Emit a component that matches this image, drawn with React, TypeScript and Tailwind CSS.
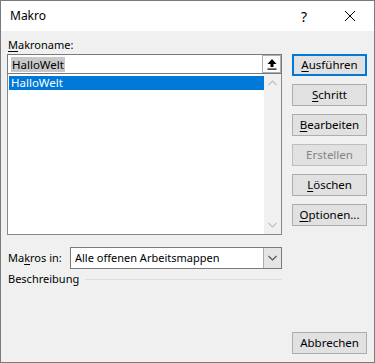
import React from 'react'

const font = { fontFamily: '"Noto Sans", "Liberation Sans", sans-serif' }

function U({ children }: { children: React.ReactNode }) {
  return <span className="underline underline-offset-2">{children}</span>
}

function Btn({ children, primary, disabled }: { children: React.ReactNode; primary?: boolean; disabled?: boolean }) {
  const cls = primary
    ? 'border-2 border-[#0078d7] text-black'
    : disabled
    ? 'border border-[#bfbfbf] text-[#838383]'
    : 'border border-[#adadad] text-black'
  return (
    <div className={`flex h-[22px] w-[75px] items-center justify-center bg-[#e1e1e1] text-[11.5px] leading-none ${cls}`}>
      {children}
    </div>
  )
}

function Chevron({ up, color }: { up?: boolean; color: string }) {
  return (
    <svg width="9" height="6" viewBox="0 0 9 6" fill="none">
      <path d={up ? 'M0.5 5 L4.5 1 L8.5 5' : 'M0.5 1 L4.5 5 L8.5 1'} stroke={color} strokeWidth="1.2" />
    </svg>
  )
}

export default function App() {
  return (
    <div style={font} className="flex h-[363px] w-[375px] flex-col border border-[#7a7a7a] text-[11px] text-black">
      {/* title bar */}
      <div className="flex h-[30px] items-center bg-white pl-[9px]">
        <span className="flex-1 text-[12px]">Makro</span>
        <span className="mr-[37px] text-[14px]">?</span>
        <svg width="12" height="12" viewBox="0 0 12 12" className="mr-[18px]">
          <path d="M1 1 L11 11 M11 1 L1 11" stroke="#000" strokeWidth="1" />
        </svg>
      </div>

      <div className="flex flex-1 gap-[10px] bg-[#f0f0f0] pb-[8px] pl-[6px]">
        {/* left column */}
        <div className="flex w-[275px] flex-col pt-[5px]">
          <div className="flex h-[18px] items-center pl-[1px]">
            <U>M</U>akroname:
          </div>
          <div className="flex h-[20px] items-stretch border border-[#7a7a7a] bg-white">
            <div className="flex flex-1 items-center pl-[3px]">
              <span className="bg-[#c8c8c8] px-[1px] text-[11.5px] leading-[15px]">HalloWelt</span>
            </div>
            <div className="flex w-[19px] items-center justify-center border border-[#adadad] bg-[#fcfcfc]">
              <svg width="10" height="12" viewBox="0 0 10 12">
                <path d="M5 1 L9.5 6 L6.5 6 L6.5 9 L3.5 9 L3.5 6 L0.5 6 Z" fill="#000" />
                <rect x="0.5" y="10.5" width="9" height="1.2" fill="#000" />
              </svg>
            </div>
          </div>
          <div className="flex h-[161px] border border-t-0 border-[#828790] bg-white">
            <div className="flex-1 pl-[1px] pt-[2px]">
              <div className="flex h-[14px] items-center bg-[#0078d7] pl-[2px] text-[11.5px] text-white">HalloWelt</div>
            </div>
            <div className="flex w-[17px] flex-col items-center justify-between bg-[#f0f0f0] py-[6px]">
              <Chevron up color="#c0c0c0" />
              <Chevron color="#c0c0c0" />
            </div>
          </div>

          <div className="mt-[12px] flex h-[22px] items-center">
            <span className="w-[63px] pl-[1px]">
              Ma<U>k</U>ros in:
            </span>
            <div className="flex h-[22px] flex-1 items-stretch border border-[#7a7a7a] bg-white">
              <div className="flex flex-1 items-center pl-[4px]">Alle offenen Arbeitsmappen</div>
              <div className="flex w-[18px] items-center justify-center border-l border-[#adadad] bg-[#e5e5e5]">
                <Chevron color="#555" />
              </div>
            </div>
          </div>

          <div className="mt-[2px] flex h-[16px] items-center gap-[6px] pl-[1px]">
            <span>Beschreibung</span>
            <div className="h-px flex-1 bg-[#dcdcdc]" />
          </div>
        </div>

        {/* right column */}
        <div className="flex flex-col gap-[8px] pt-[23px]">
          <Btn primary>
            <span><U>A</U>usführen</span>
          </Btn>
          <Btn>
            <span><U>S</U>chritt</span>
          </Btn>
          <Btn>
            <span><U>B</U>earbeiten</span>
          </Btn>
          <Btn disabled>Erstellen</Btn>
          <Btn>
            <span><U>L</U>öschen</span>
          </Btn>
          <Btn>
            <span><U>O</U>ptionen...</span>
          </Btn>
          <div className="mt-auto">
            <Btn>Abbrechen</Btn>
          </div>
        </div>
      </div>
    </div>
  )
}
